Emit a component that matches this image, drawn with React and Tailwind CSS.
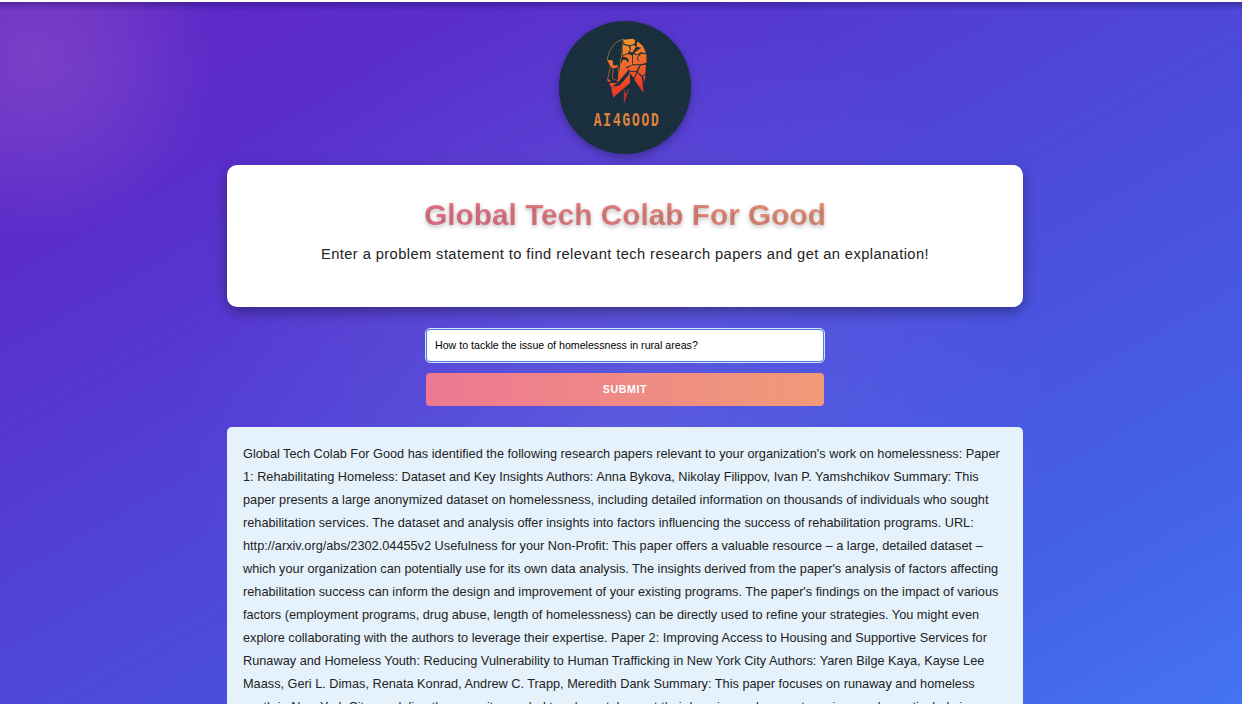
const RESULT_LINES = [
  "Global Tech Colab For Good has identified the following research papers relevant to your organization's work on homelessness: Paper",
  "1: Rehabilitating Homeless: Dataset and Key Insights Authors: Anna Bykova, Nikolay Filippov, Ivan P. Yamshchikov Summary: This",
  "paper presents a large anonymized dataset on homelessness, including detailed information on thousands of individuals who sought",
  "rehabilitation services. The dataset and analysis offer insights into factors influencing the success of rehabilitation programs. URL:",
  "http://arxiv.org/abs/2302.04455v2 Usefulness for your Non-Profit: This paper offers a valuable resource – a large, detailed dataset –",
  "which your organization can potentially use for its own data analysis. The insights derived from the paper's analysis of factors affecting",
  "rehabilitation success can inform the design and improvement of your existing programs. The paper's findings on the impact of various",
  "factors (employment programs, drug abuse, length of homelessness) can be directly used to refine your strategies. You might even",
  "explore collaborating with the authors to leverage their expertise. Paper 2: Improving Access to Housing and Supportive Services for",
  "Runaway and Homeless Youth: Reducing Vulnerability to Human Trafficking in New York City Authors: Yaren Bilge Kaya, Kayse Lee",
  "Maass, Geri L. Dimas, Renata Konrad, Andrew C. Trapp, Meredith Dank Summary: This paper focuses on runaway and homeless",
  "youth in New York City, modeling the capacity needed to adequately meet their housing and support service needs, particularly in",
];

function Logo() {
  return (
    <svg viewBox="27 27 398 398" className="block h-[132.6px] w-[132.6px] shrink-0 rounded-full bg-[#1a303f] shadow-[0_3px_8px_rgba(0,0,0,0.3)]">
      <defs>
        <linearGradient id="head" x1="190" y1="80" x2="240" y2="270" gradientUnits="userSpaceOnUse">
          <stop offset="0" stopColor="#f59a2c" />
          <stop offset="0.45" stopColor="#f2682b" />
          <stop offset="1" stopColor="#ea2026" />
        </linearGradient>
        <pattern id="grid" x="12" y="16" width="26" height="26" patternUnits="userSpaceOnUse">
          <path d="M0 0H26M0 0V26" stroke="#101f2a" strokeWidth="2" opacity="0.45" />
        </pattern>
      </defs>
      <rect x="27" y="27" width="398" height="398" fill="url(#grid)" />
      <path d="M222 82C198 84 174 112 172 145" fill="none" stroke="#b9903a" strokeWidth="2" />
      <g fill="none" stroke="url(#head)" strokeWidth="2">
        <path d="M221 83C215 104 219 128 210 152M181 165L173 202L183 208M204 162L207 205M190 168L187 200M187 200L204 206M223 234L223 272M236 232L224 266" />
      </g>
      <g fill="url(#head)">
        <path d="M172 144L188 145L190 161L204 158L200 167L187 169L179 160Z" />
        <path d="M171 202L181 204L180 211L173 207Z" />
        <path d="M212 149L236 174L216 197L202 214Z" />
        <path d="M178 213L202 213L189 221L202 225L184 227Z" />
        <path d="M240 184L240 213L190 257L184 230L211 218Z" />
        <path d="M222 83L250 80L256 86L253 96L238 100L223 95Z" />
        <path d="M220 98L236 103L240 112L234 123L218 130Z" />
        <path d="M241 102L252 99L258 105L248 121L239 121L243 110Z" />
        <path d="M261 89C273 92 284 107 288 124L273 121L259 128L253 122L274 107L260 104Z" />
        <path d="M216 133L234 126L246 130L247 158L227 166L215 153L218 143L230 144L231 152L237 147L233 138Z" />
        <path d="M249 125L257 130L266 129L273 125L289 127L290 152L273 157L249 157Z" />
        <path d="M247 160L269 160L259 178L241 177L231 169Z" />
        <path d="M273 160L288 158L286 186L277 191L263 180Z" />
        <path d="M236 179L260 181L252 198Z" />
        <path d="M262 183L275 195L278 210L280 242L253 203Z" />
        <path d="M279 193L286 190L284 211Z" />
        <path d="M223 246L229 240L224 273Z" />
      </g>
      <path d="M262 136L272 128M262 136L266 148" fill="none" stroke="#1a303f" strokeWidth="3" />
      <g transform="translate(131.5 342) scale(0.66 1)">
        <text x="0" y="0" fill="#e2853a" fontSize="58" fontWeight="700" letterSpacing="8.6" className="font-['Liberation_Mono',monospace]">
          AI4GOOD
        </text>
      </g>
    </svg>
  );
}

export default function App() {
  return (
    <div className="h-[706px] w-full overflow-hidden bg-white pt-[2px] font-['Liberation_Sans',Arial,sans-serif]">
      <div className="flex h-[701.5px] flex-col items-center overflow-hidden bg-[linear-gradient(to_bottom,rgba(20,10,80,0.35),transparent_9px),radial-gradient(circle_at_35px_55px,rgba(255,180,200,0.17),rgba(255,180,200,0.11)_75px,transparent_180px),radial-gradient(circle_at_620px_420px,rgba(255,255,255,0.08),transparent_440px),linear-gradient(to_bottom_right,#6226c6_0%,#5a2ecb_20%,#4e48da_50%,#445fe6_80%,#4574f0_100%)] pt-[19px] pl-[8px]">
        <Logo />
        <header className="mt-[11.2px] flex h-[142.4px] w-[796px] shrink-0 flex-col items-center rounded-[10px] bg-white pt-[31px] shadow-[0_5px_13px_rgba(0,0,0,0.35)]">
          <h1 className="bg-[linear-gradient(to_right,#f27a94,#f29a7c)] bg-clip-text text-[29.8px] leading-[38px] font-bold whitespace-nowrap text-transparent [text-shadow:0_2px_4px_rgba(0,0,0,0.25)]">
            Global Tech Colab For Good
          </h1>
          <p className="mt-[10px] text-[14.7px] leading-[20px] tracking-[0.41px] whitespace-nowrap text-[#222]">
            Enter a problem statement to find relevant tech research papers and get an explanation!
          </p>
        </header>
        <form className="mt-[21.6px] flex w-[398px] shrink-0 flex-col gap-[11px]">
          <input
            readOnly
            className="h-[33px] rounded-[4px] border border-[#4a7fd8] bg-white px-[8px] text-[10.64px] text-black outline-[1.5px] outline-[#d5e0fa]"
            value="How to tackle the issue of homelessness in rural areas?"
          />
          <button type="button" className="h-[33px] rounded-[4px] bg-[linear-gradient(to_right,#ee7893,#f09b78)] pt-[2px] text-[10.64px] font-bold tracking-[0.6px] text-white">
            SUBMIT
          </button>
        </form>
        <section className="mt-[21px] w-[796px] shrink-0 rounded-t-[5px] bg-[#e5f2fc] px-[16px] pt-[16.7px] text-[12.74px] leading-[22.92px] text-[#222]">
          {RESULT_LINES.map((line) => (
            <p key={line} className="whitespace-nowrap">{line}</p>
          ))}
        </section>
      </div>
    </div>
  );
}
